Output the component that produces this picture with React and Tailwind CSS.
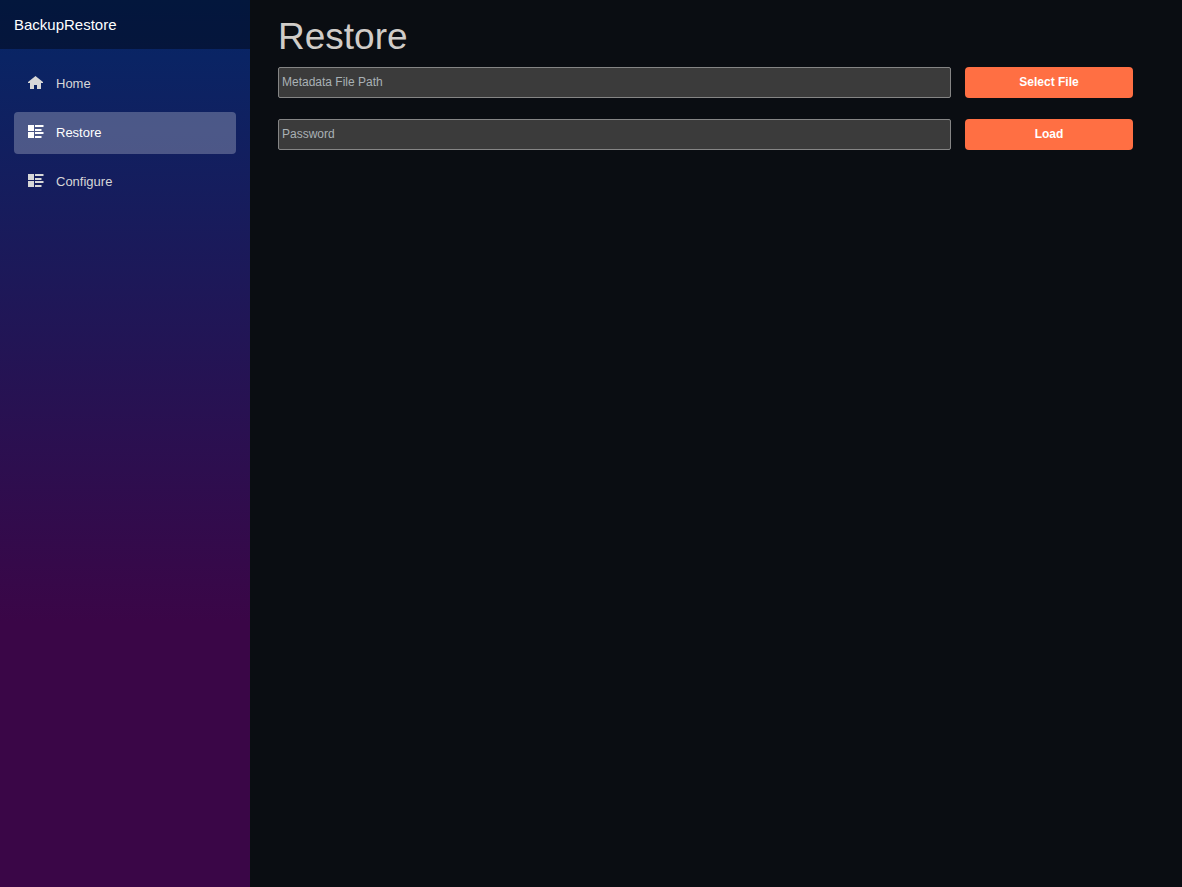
function HomeIcon() {
  return (
    <svg aria-hidden="true" viewBox="0 0 16 16" className="size-4 shrink-0" fill="currentColor">
      <path d="M7.5 0L0 6v1h2v6h4V9h3v4h4V7h2V6z" />
    </svg>
  );
}

function ListRichIcon() {
  return (
    <svg aria-hidden="true" viewBox="0 0 16 16" className="size-4 shrink-0" fill="currentColor">
      <path d="M0 0h6v6H0zM7 0h8.500v2H7zM7 4h6.500v2H7zM0 7h6v6H0zM7 7h8.500v2H7zM7 11h6.500v2H7z" />
    </svg>
  );
}

const links = [
  { label: "Home", Icon: HomeIcon },
  { label: "Restore", Icon: ListRichIcon, active: true },
  { label: "Configure", Icon: ListRichIcon },
];

const fields = [
  { id: "metadata", label: "Metadata File Path", type: "text", action: "Select File" },
  { id: "password", label: "Password", type: "password", action: "Load" },
];

export default function App() {
  return (
    <div className="flex min-h-screen bg-[#0a0d12] font-['Liberation_Sans',Arial,sans-serif]">
      <aside className="w-[250px] shrink-0 bg-[linear-gradient(180deg,#052767_0%,#3a0647_70%)]">
        <header className="flex h-[49px] items-center bg-black/40 px-3.5">
          <a href="#" className="text-[15px] leading-6 text-white">BackupRestore</a>
        </header>
        <nav className="flex flex-col gap-[7px] px-3.5 pt-3.5">
          {links.map(({ label, Icon, active }) => (
            <a
              key={label}
              href="#"
              aria-current={active ? "page" : undefined}
              className={`flex h-[42px] items-center gap-3 rounded px-3.5 text-[13px] ${
                active ? "bg-white/25 text-white" : "text-[#d7d7d7]"
              }`}
            >
              <Icon />
              {label}
            </a>
          ))}
        </nav>
      </aside>
      <main className="min-w-0 flex-1 pt-3.5 pr-[49px] pl-7">
        <h1 className="mb-2 text-[37px] leading-[45px] text-[#d0ccc8]">Restore</h1>
        <form className="flex flex-col gap-[21px]" onSubmit={(e) => e.preventDefault()}>
          {fields.map(({ id, label, type, action }) => (
            <div key={id} className="flex gap-3.5">
              <input
                id={id}
                type={type}
                aria-label={label}
                placeholder={label}
                className="h-[31px] min-w-0 flex-1 rounded-[2px] border border-[#858585] bg-[#3b3b3b] px-[3px] pb-0.5 text-xs text-white placeholder:text-[#a9b1b5]"
              />
              <button type="button" className="h-[31px] w-[168px] rounded bg-[#ff6f43] pb-0.5 text-xs font-bold text-white">
                {action}
              </button>
            </div>
          ))}
        </form>
      </main>
    </div>
  );
}
